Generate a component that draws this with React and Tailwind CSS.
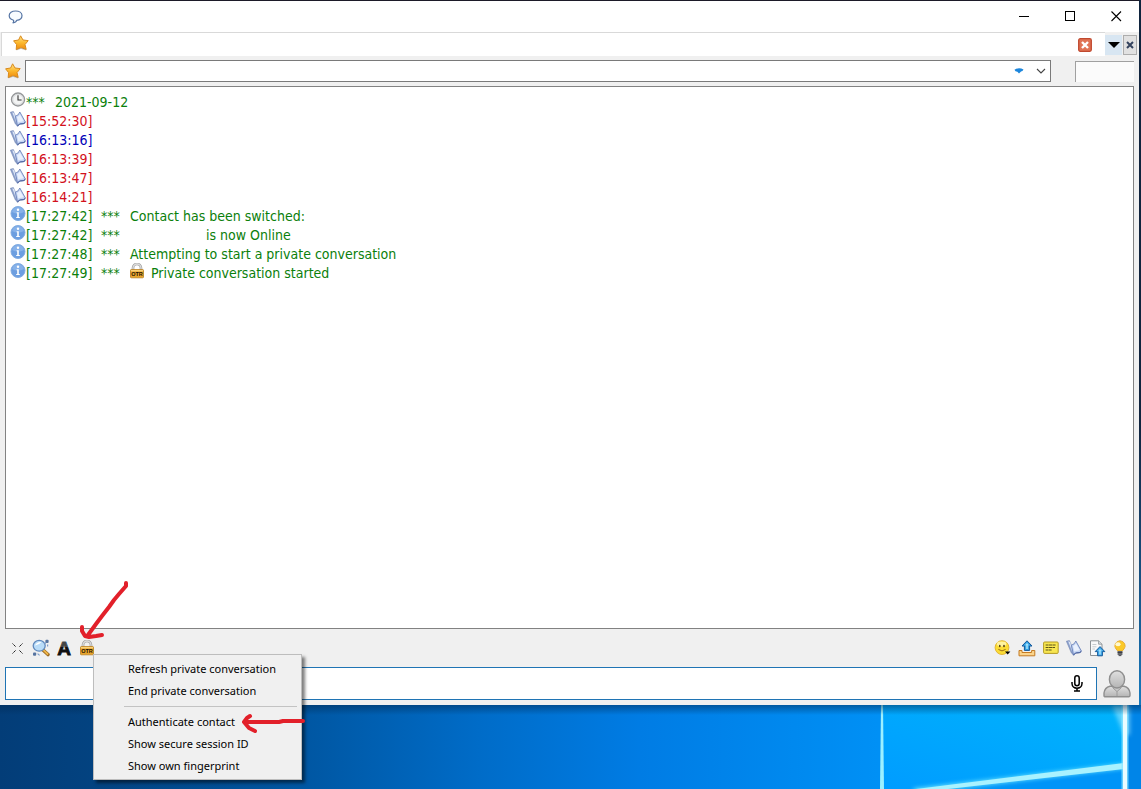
import { useState } from "react";

const mensajes = [
    { hora: '15:52:30', icono: 'libro', color: 'text-[#d2101c]' },
    { hora: '16:13:16', icono: 'libro', color: 'text-[#0000b8]' },
    { hora: '16:13:39', icono: 'libro', color: 'text-[#d2101c]' },
    { hora: '16:13:47', icono: 'libro', color: 'text-[#d2101c]' },
    { hora: '16:14:21', icono: 'libro', color: 'text-[#d2101c]' },
    { hora: '17:27:42', icono: 'info', color: 'text-[#0b800b]', texto: 'Contact has been switched:' },
    { hora: '17:27:42', icono: 'info', color: 'text-[#0b800b]', texto: 'is now Online', sangria: 'pl-[76px]' },
    { hora: '17:27:48', icono: 'info', color: 'text-[#0b800b]', texto: 'Attempting to start a private conversation' },
    { hora: '17:27:49', icono: 'info', color: 'text-[#0b800b]', texto: 'Private conversation started', candado: true },
];

const Estrella = () => (
    <svg width="16" height="16" viewBox="0 0 16 16">
        <defs>
            <linearGradient id="estrella" x1="0" y1="0" x2="0" y2="1">
                <stop offset="0" stopColor="#ffe28a" />
                <stop offset="0.5" stopColor="#fcb92e" />
                <stop offset="1" stopColor="#ef8a0c" />
            </linearGradient>
        </defs>
        <path d="M7.6 0.8 L10 5 L15.2 5.6 L12 9.6 L13.2 14.4 L8 12.6 L3.2 14.6 L3.6 9.6 L0.6 5.8 L5.6 5 Z" fill="url(#estrella)" stroke="#d98a1c" strokeWidth="1" strokeLinejoin="round" />
        <path d="M3.6 14.9 L8 13.4 L13 15" stroke="#8a7a6a" strokeWidth="0.7" fill="none" opacity="0.6" />
    </svg>
)

const Reloj = () => (
    <svg width="16" height="16" viewBox="0 0 16 16">
        <circle cx="8" cy="7.5" r="6.5" fill="#f3f4f4" stroke="#96989a" strokeWidth="1.4" />
        <circle cx="8" cy="7.5" r="5.2" fill="none" stroke="#cfd2d4" strokeWidth="0.8" />
        <path d="M8 3.2 V8 H11.6" stroke="#333" strokeWidth="1.1" fill="none" />
    </svg>
)

const Libro = () => (
    <svg width="16" height="16" viewBox="0 0 16 16">
        <path d="M0.4 1.2 L3.4 0.6 L5.4 5 L7.6 15.2 L5.4 13 Z" fill="#8ea2cc" stroke="#7085b4" strokeWidth="0.6" strokeLinejoin="round" />
        <path d="M2.2 1.2 L4.2 2 L7 13.4 Z" fill="#dbe5f7" />
        <path d="M5.4 5.2 Q8.6 4.6 9.8 1 L15.4 11 Q14 13.2 11 12.6 Q9 12.8 7.6 15.2 Z" fill="#c4d5f4" stroke="#6d84ba" strokeWidth="0.9" strokeLinejoin="round" />
        <path d="M7 6 Q9.2 5.2 10 3.4 L13.6 10 Q12.4 11 10.6 10.8 L8.4 11.6 Z" fill="#eaf1fd" />
        <path d="M7.6 15 Q9 12.9 11 12.8 Q14 13.2 15.4 11.2" stroke="#5268a2" strokeWidth="1.1" fill="none" />
    </svg>
)

const Info = () => (
    <svg width="16" height="16" viewBox="0 0 16 16">
        <circle cx="8" cy="7.5" r="7" fill="#6c9ee0" stroke="#83ade2" strokeWidth="1" />
        <path d="M2 6 A6.2 6.2 0 0 1 14 6 Q8 9 2 6" fill="#93bbec" opacity="0.7" />
        <circle cx="8" cy="3.8" r="1.2" fill="#fff" />
        <path d="M6.6 6.2 H8.8 V11 H9.8 V12 H6.2 V11 H7.2 V7.2 H6.6 Z" fill="#fff" />
    </svg>
)

const Candado = () => (
    <svg width="14" height="16" viewBox="0 0 14 16">
        <path d="M3 8 V5 A4 4 0 0 1 11 5 V8" fill="none" stroke="#9a9a9a" strokeWidth="2.6" />
        <path d="M3 8 V5 A4 4 0 0 1 11 5 V8" fill="none" stroke="#dedede" strokeWidth="1.3" />
        <rect x="0.5" y="6.6" width="13" height="8.2" rx="0.8" fill="#e9a52c" stroke="#b97f1d" strokeWidth="0.8" />
        <rect x="1" y="7" width="12" height="1.4" fill="#f9d27a" />
        <text x="7" y="13.2" fontSize="5.5" fontWeight="bold" textAnchor="middle" fontFamily="Liberation Sans, sans-serif" fill="#1c1206">OTR</text>
    </svg>
)

const Lupa = () => (
    <svg width="18" height="18" viewBox="0 0 18 18">
        <path d="M11 11 L16 15.6" stroke="#9b6a22" strokeWidth="3.4" strokeLinecap="round" />
        <path d="M11.5 11.2 L15.6 15" stroke="#f0b648" strokeWidth="1.8" strokeLinecap="round" />
        <ellipse cx="7.2" cy="6.8" rx="6" ry="5.4" fill="#b9dcf8" stroke="#6089bd" strokeWidth="1.3" />
        <path d="M3 6.6 Q4.6 2.6 9.4 3 Q7 6 3 6.6" fill="#fff" />
        <rect x="13.4" y="0.8" width="3.2" height="3.2" rx="1" fill="#55739f" />
        <rect x="1" y="13.6" width="3.2" height="3.2" rx="1" fill="#55739f" />
        <path d="M12.4 5 L14 3.4 M15.6 5.6 V7.6 M5.6 14.6 L7.6 16.4" stroke="#7d9cc8" strokeWidth="1.2" />
    </svg>
)

const LetraA = () => (
    <svg width="16" height="18" viewBox="0 0 16 18">
        <text x="8" y="15.5" fontSize="19" fontWeight="bold" textAnchor="middle" fontFamily="Liberation Sans, sans-serif" fill="#111" stroke="#111" strokeWidth="0.8">A</text>
        <path d="M6 2 H10 L12 8 H4 Z" fill="#fff" opacity="0.22" />
    </svg>
)

const Carita = () => (
    <svg width="17" height="16" viewBox="0 0 17 16">
        <circle cx="8" cy="7.6" r="6.9" fill="#fbdc35" stroke="#e0b02c" strokeWidth="0.9" />
        <ellipse cx="7.6" cy="4" rx="4.8" ry="2.4" fill="#fff3a0" />
        <ellipse cx="5.8" cy="6" rx="0.8" ry="1.2" fill="#4a3510" />
        <ellipse cx="10" cy="6" rx="0.8" ry="1.2" fill="#4a3510" />
        <path d="M4.4 9.4 Q8 12.4 11.6 9.4" fill="none" stroke="#9a6a14" strokeWidth="1" />
        <path d="M11 11.4 H16.4 L13.7 14.4 Z" fill="#000" />
    </svg>
)

const Subir = () => (
    <svg width="18" height="17" viewBox="0 0 18 17">
        <path d="M1 10.5 H4 V12.5 H13.6 V10.5 H16.8 V15.8 H1 Z" fill="#fbd48b" stroke="#c47a22" strokeWidth="1" />
        <path d="M9 0.8 L14 6 H11.6 V10.4 H6.4 V6 H4 Z" fill="#35a5e6" stroke="#14589b" strokeWidth="1" />
        <path d="M9 3 L11 5.2 H9.8 V9 H8.2 V5.2 H7 Z" fill="#a5e0fb" />
    </svg>
)

const Nota = () => (
    <svg width="16" height="14" viewBox="0 0 16 14">
        <rect x="0.6" y="1" width="14.6" height="11.4" rx="1" fill="#f8e650" stroke="#b59b25" strokeWidth="1" />
        <path d="M2.6 4 H13 M2.6 6.5 H12 M2.6 9 H8.6" stroke="#5d5416" strokeWidth="1.1" strokeDasharray="3 0.4" />
    </svg>
)

const PaginaSubir = () => (
    <svg width="17" height="17" viewBox="0 0 17 17">
        <path d="M1.5 0.8 H9.6 L13 4.2 V15.5 H1.5 Z" fill="#f8f9fa" stroke="#8c9296" strokeWidth="1" />
        <path d="M9.6 0.8 V4.2 H13" fill="#d8dcdf" stroke="#8c9296" strokeWidth="0.8" />
        <path d="M3.4 4.5 H7.4 M3.4 6.8 H7.4 M3.4 9 H6" stroke="#c6cbce" />
        <path d="M11 6.6 L15.8 11.6 H13.4 V15.8 H8.6 V11.6 H6.2 Z" fill="#45acea" stroke="#175d9f" strokeWidth="1" />
        <path d="M11 9 L12.8 11 H11.8 V14.4 H10.2 V11 H9.2 Z" fill="#a5e0fb" />
    </svg>
)

const Bombilla = () => (
    <svg width="14" height="17" viewBox="0 0 14 17">
        <path d="M7 0.7 A5.8 5.2 0 0 1 11 9 Q9.6 10.2 9.4 11 H4.6 Q4.4 10.2 3 9 A5.8 5.2 0 0 1 7 0.7 Z" fill="#fbc928" stroke="#e8a92d" strokeWidth="0.9" />
        <ellipse cx="5" cy="4.2" rx="2.6" ry="2" fill="#fff8cc" />
        <rect x="4.6" y="11" width="4.8" height="4" fill="#65686f" />
        <path d="M4.6 12.4 H9.4 M5.6 15.6 H8.4" stroke="#33353a" strokeWidth="0.9" />
    </svg>
)

const Microfono = () => (
    <svg width="12" height="17" viewBox="0 0 12 17" fill="none" stroke="#000" strokeWidth="1.5">
        <rect x="3.8" y="0.8" width="4.4" height="10" rx="2.2" />
        <path d="M1 7 V8.6 A5 4.6 0 0 0 11 8.6 V7 M6 13.2 V16 M3 16 H9" />
    </svg>
)

const Avatar = () => (
    <svg width="28" height="28" viewBox="0 0 28 28">
        <defs>
            <linearGradient id="avatar" x1="0" y1="0" x2="0" y2="1">
                <stop offset="0" stopColor="#e0e0e0" />
                <stop offset="1" stopColor="#b4b4b4" />
            </linearGradient>
        </defs>
        <path d="M1 25.4 V23 Q1.6 17.6 7 16.2 H21 Q26.4 17.6 27 23 V25.4 Q27 26.8 25.6 26.8 H2.4 Q1 26.8 1 25.4 Z" fill="url(#avatar)" stroke="#8f8f8f" strokeWidth="1.4" strokeLinejoin="round" />
        <path d="M9.4 17.4 L14 21.6 L18.6 17.4 M14 21.6 V26" fill="#c9c9c9" stroke="#9a9a9a" strokeWidth="1" />
        <ellipse cx="14" cy="9.4" rx="7.6" ry="8.6" fill="url(#avatar)" stroke="#8f8f8f" strokeWidth="1.4" />
    </svg>
)

const Escritorio = () => (
    <svg className="block w-full h-[84px]" viewBox="0 0 1141 84" preserveAspectRatio="none">
        <defs>
            <linearGradient id="cielo" x1="0" y1="0" x2="1" y2="0">
                <stop offset="0" stopColor="#033d78" />
                <stop offset="0.09" stopColor="#034381" />
                <stop offset="0.27" stopColor="#0057a3" />
                <stop offset="0.42" stopColor="#006cc8" />
                <stop offset="0.56" stopColor="#007ce4" />
                <stop offset="0.77" stopColor="#0090f5" />
            </linearGradient>
            <linearGradient id="ventana" x1="0" y1="1" x2="1" y2="0">
                <stop offset="0" stopColor="#009cff" />
                <stop offset="1" stopColor="#00b4fc" />
            </linearGradient>
            <linearGradient id="sombra" x1="0" y1="0" x2="0" y2="1">
                <stop offset="0" stopColor="#002850" stopOpacity="0.5" />
                <stop offset="1" stopColor="#002850" stopOpacity="0" />
            </linearGradient>
            <filter id="brillo" filterUnits="userSpaceOnUse" x="860" y="-20" width="300" height="130">
                <feGaussianBlur stdDeviation="2" />
            </filter>
        </defs>
        <rect width="1141" height="84" fill="url(#cielo)" />
        <rect x="882" width="242" height="84" fill="url(#ventana)" />
        <rect x="1128" width="13" height="84" fill="#0085e8" />
        <path d="M922 84 L1124 60 V84 Z" fill="#0094f8" />
        <path d="M914 86 L1124 61" stroke="#6be4ff" strokeWidth="5" filter="url(#brillo)" />
        <path d="M916 84 L1124 58 V64 L948 84 Z" fill="#a9f2ff" />
        <path d="M1112 0 H1130 V30 H1124 Z" fill="#9fe8ff" opacity="0.6" filter="url(#brillo)" />
        <path d="M1125 0 V84" stroke="#8fe6ff" strokeWidth="7" opacity="0.7" />
        <path d="M1125 0 V84" stroke="#e9fcff" strokeWidth="4" />
        <path d="M881 0 H883 L884 84 H880 Z" fill="#9cf0ff" />
        <rect width="1141" height="10" fill="url(#sombra)" />
    </svg>
)

const Separador = () => <div className="ml-[30px] mr-1 my-1 border-t border-[#c3c3c3]"></div>

const Opcion = ({ children }) => (
    <button className="block w-full h-[22px] pl-[34px] text-left hover:bg-[#91c9f7]">{children}</button>
)

export default function App() {

    const [mensaje, setMensaje] = useState('');
    const [busqueda, setBusqueda] = useState('');

    return (
        <div className="min-h-screen flex flex-col bg-[#033d78]">
            <div className="grow flex flex-col pr-[2px] bg-linear-to-b from-[#10243e] from-60% to-[#147abf]">
                <div className="grow flex flex-col bg-[#f0f0f0] border-t border-[#1c1a28]">

                    <header className="h-[31px] flex items-center bg-white pl-2">
                        <svg width="15" height="14" viewBox="0 0 15 14">
                            <path d="M8.6 10.4 C12 10.2 14 8.2 14 5.6 C14 2.8 11.2 1 7.6 1 C3.8 1 1.2 2.8 1.2 5.6 C1.2 7.8 2.8 9.4 5 10 Q6.4 10.6 5 12.8 Q8 12.6 8.6 10.4 Z" fill="#f7fbff" stroke="#5574a4" strokeWidth="1.2" strokeLinejoin="round" />
                        </svg>
                        <div className="ml-auto flex h-full">
                            <button aria-label="Minimize" className="w-[46px] flex justify-center items-center">
                                <svg width="11" height="11" viewBox="0 0 11 11"><path d="M0 5.5 H10" stroke="#000" /></svg>
                            </button>
                            <button aria-label="Maximize" className="w-[46px] flex justify-center items-center">
                                <svg width="11" height="11" viewBox="0 0 11 11"><rect x="0.5" y="0.5" width="9" height="9" fill="none" stroke="#000" /></svg>
                            </button>
                            <button aria-label="Close" className="w-[46px] flex justify-center items-center">
                                <svg width="11" height="11" viewBox="0 0 11 11"><path d="M0.5 0.5 L10 10 M10 0.5 L0.5 10" stroke="#000" strokeWidth="1.1" /></svg>
                            </button>
                        </div>
                    </header>

                    <div className="flex h-6 ml-px">
                        <div className="grow flex items-center justify-between bg-white border-t border-l border-[#d9d9d9] pl-[11px] pr-[13px]">
                            <div className="pb-1"><Estrella /></div>
                            <button aria-label="Close tab">
                                <svg width="14" height="14" viewBox="0 0 14 14">
                                    <rect x="0.7" y="0.7" width="12.6" height="12.6" rx="1.5" fill="#e07355" stroke="#c0492f" strokeWidth="1.3" />
                                    <path d="M4 4 L10 10 M10 4 L4 10" stroke="#fff" strokeWidth="2.4" />
                                </svg>
                            </button>
                        </div>
                        <div className="flex pt-[3px] pr-[2px] gap-px">
                            <button aria-label="Tab list" className="w-[17px] h-5 flex justify-center items-center bg-[#d8e6f2]">
                                <svg width="12" height="6" viewBox="0 0 12 6"><path d="M0 0 H12 L6 6 Z" fill="#000" /></svg>
                            </button>
                            <button aria-label="Close window" className="w-[14px] h-5 flex justify-center items-center bg-[#e1e1e1] border border-[#adadad]">
                                <svg width="8" height="8" viewBox="0 0 8 8"><path d="M1 1 L7 7 M7 1 L1 7" stroke="#34435e" strokeWidth="2" /></svg>
                            </button>
                        </div>
                    </div>

                    <div className="flex items-center h-[30px] px-[5px]">
                        <Estrella />
                        <div className="grow ml-1 h-[22px] flex items-center bg-white border border-[#7a7a7a] pr-1">
                            <input aria-label="Contact" className="grow h-full px-1 text-xs outline-none" value={busqueda} onChange={(e) => setBusqueda(e.target.value)} />
                            <svg width="10" height="8" viewBox="0 0 10 8">
                                <path d="M0.5 2.8 Q5 -0.4 9.5 2.6 Q8.6 4.6 7 4.6 L5 6.6 L3.4 4.8 Q1 4.6 0.5 2.8 Z" fill="#1c86dc" />
                            </svg>
                            <button aria-label="Open list" className="ml-3">
                                <svg width="10" height="10" viewBox="0 0 10 10"><path d="M1 3 L5 7 L9 3" fill="none" stroke="#444" strokeWidth="1.1" /></svg>
                            </button>
                        </div>
                        <div className="ml-6 w-[59px] h-[21px] bg-[#fbfbfb] border-t border-l border-[#a0a0a0]"></div>
                    </div>

                    <main className="grow mx-[5px] pt-[5px] pl-1 bg-white border border-[#828282] font-['DejaVu_Sans_Condensed','DejaVu_Sans',sans-serif] text-[14px] leading-[21px]">
                        <div className="flex h-[19px] text-[#0b800b]">
                            <Reloj />
                            <span className="w-[29px]">***</span>
                            <span>2021-09-12</span>
                        </div>
                        {mensajes.map((m, i) => (
                            <div key={i} className={`flex h-[19px] ${m.color}`}>
                                {m.icono === 'libro' ? <Libro /> : <Info />}
                                <span className="w-[75px]">[{m.hora}]</span>
                                {m.texto && <span className="w-[29px]">***</span>}
                                {m.candado && <span className="mr-[7px]"><Candado /></span>}
                                {m.texto && <span className={m.sangria}>{m.texto}</span>}
                            </div>
                        ))}
                    </main>

                    <div className="h-[38px] flex items-center justify-between px-3">
                        <div className="flex items-center">
                            <button aria-label="Collapse" className="mr-[9px]">
                                <svg width="11" height="11" viewBox="0 0 11 11">
                                    <path d="M0.5 0.5 L4 4 M10.5 0.5 L7 4 M0.5 10.5 L4 7 M10.5 10.5 L7 7" stroke="#222" strokeDasharray="1.6 0.5" />
                                </svg>
                            </button>
                            <button aria-label="Search" className="mr-[6px]"><Lupa /></button>
                            <button aria-label="Font" className="mr-2"><LetraA /></button>
                            <div className="relative">
                                <button aria-label="OTR" className="block"><Candado /></button>
                                <svg className="absolute -left-1 bottom-4 z-20 pointer-events-none" width="56" height="62" viewBox="0 0 56 62">
                                    <path d="M50 5 V8 L43 16 L38 22 L33 29 L26 38 L20 46 L12 57 M6 49 V53 L9 58 L13 59 L20 58 L26 57" fill="none" stroke="#e2202a" strokeWidth="4" strokeLinecap="round" strokeLinejoin="round" />
                                </svg>
                                <div className="absolute left-[13px] top-[14px] z-10 w-[209px] pt-[3px] pb-[2px] bg-[#f0f0f0] border border-[#bdbdbd] shadow-[3px_3px_3px_rgba(0,0,0,0.5)] font-['Noto_Sans',sans-serif] text-[11px] leading-[22px] whitespace-nowrap text-black">
                                    <Opcion>Refresh private conversation</Opcion>
                                    <Opcion>End private conversation</Opcion>
                                    <Separador />
                                    <Opcion>Authenticate contact</Opcion>
                                    <Opcion>Show secure session ID</Opcion>
                                    <Opcion>Show own fingerprint</Opcion>
                                    <svg className="absolute left-[147px] top-[57px] pointer-events-none" width="64" height="22" viewBox="0 0 64 22">
                                        <path d="M62 9 H42 L38 10 H4 M9 4 L6 6 L3 10 L8 16 L14 19" fill="none" stroke="#e2202a" strokeWidth="4" strokeLinecap="round" strokeLinejoin="round" />
                                    </svg>
                                </div>
                            </div>
                        </div>
                        <div className="flex items-center gap-[7px]">
                            <button aria-label="Smileys"><Carita /></button>
                            <button aria-label="Send file"><Subir /></button>
                            <button aria-label="Notes"><Nota /></button>
                            <button aria-label="History"><Libro /></button>
                            <button aria-label="Upload"><PaginaSubir /></button>
                            <button aria-label="Hints"><Bombilla /></button>
                        </div>
                    </div>

                    <div className="flex items-center pl-[5px] pr-2 pb-[5px]">
                        <div className="grow h-[33px] flex items-center bg-white border border-[#1f74b4] pr-[13px]">
                            <input aria-label="Message" className="grow h-full px-2 text-sm outline-none" value={mensaje} onChange={(e) => setMensaje(e.target.value)} />
                            <button aria-label="Record"><Microfono /></button>
                        </div>
                        <button aria-label="Avatar" className="ml-[6px]"><Avatar /></button>
                    </div>
                </div>
            </div>
            <Escritorio />
        </div>
    )
}
